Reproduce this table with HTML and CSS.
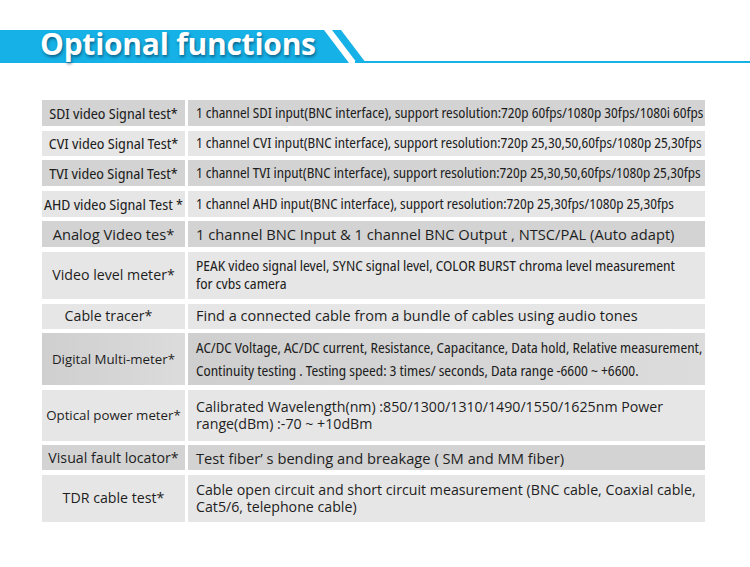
FILE: index.html
```html
<!DOCTYPE html>
<html>
<head>
<meta charset="utf-8">
<link rel="stylesheet" href="styles.css">
</head>
<body>
<header class="banner">
  <svg class="banner-bg" width="750" height="33" viewBox="0 0 750 33" aria-hidden="true">
    <polygon points="0,0 324,0 349,33 0,33" fill="#16b1e6"/>
    <polygon points="332,0 341,0 366,33 357,33" fill="#16b1e6"/>
    <rect x="355" y="31" width="395" height="2.5" fill="#16b1e6"/>
  </svg>
  <h1 class="title">Optional functions</h1>
</header>

<section class="spec">
  <div class="cell name dark cond">SDI video Signal test*</div>
  <div class="cell desc dark cond res">1 channel SDI input(BNC interface), support resolution:720p 60fps/1080p 30fps/1080i 60fps</div>

  <div class="cell name light cond">CVI video Signal Test*</div>
  <div class="cell desc light cond res">1 channel CVI input(BNC interface), support resolution:720p 25,30,50,60fps/1080p 25,30fps</div>

  <div class="cell name dark cond">TVI video Signal Test*</div>
  <div class="cell desc dark cond res">1 channel TVI input(BNC interface), support resolution:720p 25,30,50,60fps/1080p 25,30fps</div>

  <div class="cell name light cond">AHD video Signal Test *</div>
  <div class="cell desc light cond res">1 channel AHD input(BNC interface), support resolution:720p 25,30fps/1080p 25,30fps</div>

  <div class="cell name dark big">Analog Video tes*</div>
  <div class="cell desc dark big">1 channel BNC Input &amp; 1 channel BNC Output , NTSC/PAL (Auto adapt)</div>

  <div class="cell name light">Video level meter*</div>
  <div class="cell desc light cond peak">PEAK video signal level, SYNC signal level, COLOR BURST chroma level measurement<br>for cvbs camera</div>

  <div class="cell name light shift">Cable tracer*</div>
  <div class="cell desc light mid">Find a connected cable from a bundle of cables using audio tones</div>

  <div class="cell name grad small">Digital Multi-meter*</div>
  <div class="cell desc grad cond meter">AC/DC Voltage, AC/DC current, Resistance, Capacitance, Data hold, Relative measurement,<br>Continuity testing . Testing speed: 3 times/ seconds, Data range -6600 ~ +6600.</div>

  <div class="cell name light small">Optical power meter*</div>
  <div class="cell desc light two">Calibrated Wavelength(nm) :850/1300/1310/1490/1550/1625nm Power<br>range(dBm) :-70 ~ +10dBm</div>

  <div class="cell name dark">Visual fault locator*</div>
  <div class="cell desc dark big">Test fiber’ s bending and breakage ( SM and MM fiber)</div>

  <div class="cell name light">TDR cable test*</div>
  <div class="cell desc light two">Cable open circuit and short circuit measurement (BNC cable, Coaxial cable,<br>Cat5/6, telephone cable)</div>
</section>
</body>
</html>
```
FILE: styles.css
```css
html, body {
  margin: 0;
  padding: 0;
  background: #ffffff;
}

body {
  width: 750px;
  height: 567px;
  overflow: hidden;
  font-family: "Open Sans", "Noto Sans", sans-serif;
  color: #1e1e1e;
}

.banner {
  position: relative;
  height: 33px;
  margin-top: 30px;
}

.banner-bg {
  position: absolute;
  left: 0;
  top: 0;
  display: block;
}

.title {
  position: relative;
  margin: 0;
  padding-left: 40px;
  font-family: "Open Sans", sans-serif;
  font-weight: 700;
  font-size: 30px;
  line-height: 27px;
  letter-spacing: -0.25px;
  color: #ffffff;
  text-shadow: 1px 2px 3px rgba(0, 40, 70, 0.55);
  white-space: nowrap;
}

.spec {
  display: grid;
  grid-template-columns: 143px 517px;
  grid-template-rows: 26px 25px 26px 26px 26px 47px 25px 52px 51px 25px 47px;
  column-gap: 3px;
  row-gap: 4.6px;
  margin: 37px 0 0 42px;
  width: 663px;
}

.cell {
  display: flex;
  align-items: center;
  font-size: 14.2px;
  line-height: 18px;
  white-space: nowrap;
}

.name {
  justify-content: center;
  text-align: center;
}

.desc {
  padding-left: 8px;
}

.dark { background: #d3d3d3; }
.light { background: #e6e6e6; }
.grad { background: linear-gradient(90deg, #cfcfcf 0%, #d6d6d6 60%, #dcdcdc 100%); }

.cond {
  font-family: "Noto Sans Display", "Roboto Condensed", sans-serif;
  font-stretch: 75%;
  font-size: 14.7px;
}

.res { font-size: 13.7px; }
.peak { font-size: 14.1px; line-height: 18.5px; }
.meter { font-size: 13.9px; line-height: 23px; }

.big { font-size: 14.7px; }
.mid { font-size: 14.5px; }
.small { font-size: 13.3px; }
.shift { padding-right: 10px; }

.two { line-height: 17.5px; }
```
